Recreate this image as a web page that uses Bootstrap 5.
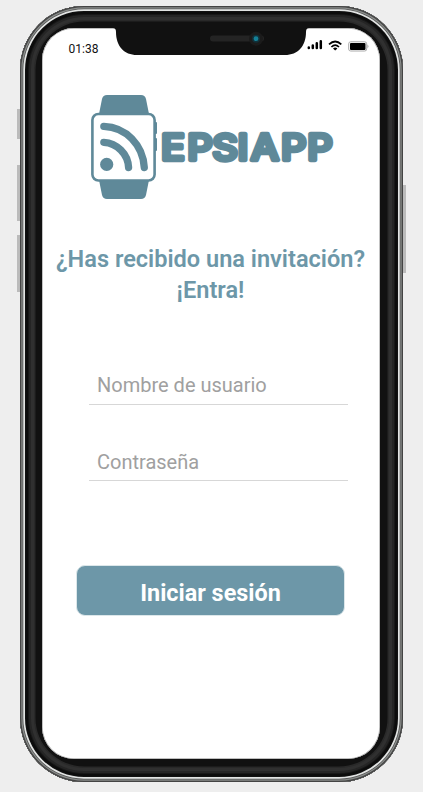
<!DOCTYPE html>
<html lang="es">
<head>
<meta charset="utf-8">
<meta name="viewport" content="width=device-width, initial-scale=1">
<title>EPSIAPP</title>
<link href="https://cdn.jsdelivr.net/npm/bootstrap@5.3.0/dist/css/bootstrap.min.css" rel="stylesheet">
<style>
html, body { height: 792px; overflow: hidden; }
body { background: #eee; font-family: Roboto, "Liberation Sans", sans-serif; }
.phone { width: 383px; height: 776px; margin: 6px 0 0 19.5px; border-radius: 64px; padding: 22px 23px 23px 22px; background: #111;
  box-shadow: inset 0 0 0 1.3px #444, inset 0 0 0 2.5px #8a8d8b, inset 0 0 0 3.3px #555, inset 0 0 0 5px #e2e4e3, inset 0 0 0 6px #111, inset 0 0 0 8px #0c0c0c, inset 0 0 0 9px #181818, inset 0 0 0 11px #252525, inset 0 0 0 14px #303030, inset 0 0 0 15.5px #292929; }
.side-key { background: #bbb; width: 3px; z-index: -1; }
.k1 { left: 17px; top: 109px; height: 30px; }
.k2 { left: 17px; top: 165px; height: 56px; }
.k3 { left: 17px; top: 235px; height: 57px; }
.k4 { left: 402px; top: 185px; height: 88px; width: 3.5px; }
.app-screen { background: #fff; border-radius: 32px; box-shadow: inset 0 0 0 .7px #aaa; }
.notch { left: 71px; top: 0; }
.clock { font-size: 12px; line-height: 14px; margin: 14px 0 0 27px; color: #111; }
.status-icons { margin: 10px 10px 0 0; }
.brand { margin: 36px 0 0 45.5px; width: 250px; height: 110px; }
.brand text { font-family: Inter, Roboto, sans-serif; font-weight: 500; font-size: 36px; }
.headline { font-size: 23.55px; line-height: 31px; font-weight: 600; color: #6d97a8; margin-top: 42px; white-space: nowrap; }
.entry-fields { margin: 56px 31.5px 0 47.5px; }
.entry-fields .form-control { height: 43px; padding: 4px 8px 0 8px; font-size: 20px; border-bottom: 1px solid #d7d7d7 !important; box-shadow: none; background: transparent; }
.entry-fields .form-control::placeholder { color: #a0a0a0; opacity: 1; }
.entry-fields .form-control + .form-control { margin-top: 33px; padding-top: 6px; }
.enter { width: 269px; height: 51px; margin: 84px 0 0 34.5px; background: #6d97a8; border: 1px solid #dce7ea; border-radius: 9px; color: #fff; font-size: 23.4px; font-weight: 700; line-height: 30px; padding: 5px 0 0; }
.enter:hover { background: #5f8998; color: #fff; }
</style>
</head>
<body>
<div class="side-key k1 position-absolute"></div>
<div class="side-key k2 position-absolute"></div>
<div class="side-key k3 position-absolute"></div>
<div class="side-key k4 position-absolute"></div>
<div class="phone">
  <main class="app-screen h-100 position-relative d-flex flex-column">
    <svg class="notch position-absolute" width="196" height="28" viewBox="0 0 196 28">
      <path d="M0 0H196Q193 0 193 4C193 18 185 27 172 27H24C11 27 3 18 3 4Q3 0 0 0Z" fill="#111"/>
      <rect x="97" y="7.5" width="54" height="6" rx="3" fill="#242424"/>
      <circle cx="143" cy="10.7" r="7" fill="#1b1b1b"/><circle cx="143" cy="10.7" r="4" fill="#123039"/><circle cx="143" cy="10.7" r="2.4" fill="#148097"/>
    </svg>
    <header class="d-flex justify-content-between">
      <span class="clock">01:38</span>
      <svg class="status-icons" width="64" height="16" viewBox="306 38 64 16">
        <g stroke="#000" stroke-width="2.5" stroke-linecap="round"><path d="M308.8 47.5V48M312.8 45.5V48M316.8 43.3V48M320.8 41.2V48"/></g>
        <g fill="none" stroke="#000" stroke-width="1.7"><path d="M329 44.4Q335.2 38.6 341.3 44.4M331.4 47Q335.2 43.4 339 47"/></g><path d="M333 48.4Q335.2 46.7 337.4 48.4L335.2 50.6Z"/>
        <rect x="348.7" y="41.8" width="18" height="9.2" rx="2" fill="#fff" stroke="#aaa"/><rect x="350" y="43" width="15.5" height="6.9" rx="1"/><path d="M367.5 44.5Q369.5 46.4 367.5 48.3Z" fill="#999"/>
      </svg>
    </header>
    <svg class="brand flex-shrink-0" viewBox="87 92 250 110" role="img" aria-label="EPSIAPP">
      <g fill="#5f8999">
        <path d="M99 114L102 99Q103 95 107 95H141Q145 95 146 99L149 114ZM99 180L102 195Q103 199 107 199H141Q145 199 146 195L149 180Z"/>
        <rect x="154" y="122" width="3" height="12" rx="1"/><rect x="154" y="138" width="3" height="13" rx="1"/>
        <rect x="92.4" y="114" width="62.2" height="66.5" rx="6" fill="#fff" stroke="#5f8999" stroke-width="2.6"/>
        <circle cx="106.7" cy="164.4" r="6.6"/>
      </g>
      <g fill="none" stroke="#5f8999" stroke-width="7.3" stroke-linecap="round"><path d="M103.8 126.3C126 127 143 145 144.3 167.5M103.8 142.3C117 143 128 154 128.6 167.5"/></g>
      <text transform="translate(161 160.2) scale(1.1 1)" x="0 23.9 46.6 69.6 81.5 109 133" y="0" fill="#5f8999" stroke="#5f8999" stroke-width="4.3" stroke-linejoin="round">EPSIAPP</text>
    </svg>
    <h1 class="headline text-center mb-0">¿Has recibido una invitación?<br>¡Entra!</h1>
    <form class="d-flex flex-column">
      <div class="entry-fields">
        <input class="form-control border-0 rounded-0" type="text" placeholder="Nombre de usuario" aria-label="Nombre de usuario">
        <input class="form-control border-0 rounded-0" type="password" placeholder="Contraseña" aria-label="Contraseña">
      </div>
      <button class="btn enter" type="button">Iniciar sesión</button>
    </form>
  </main>
</div>
<script src="https://cdn.jsdelivr.net/npm/bootstrap@5.3.0/dist/js/bootstrap.bundle.min.js"></script>
</body>
</html>
